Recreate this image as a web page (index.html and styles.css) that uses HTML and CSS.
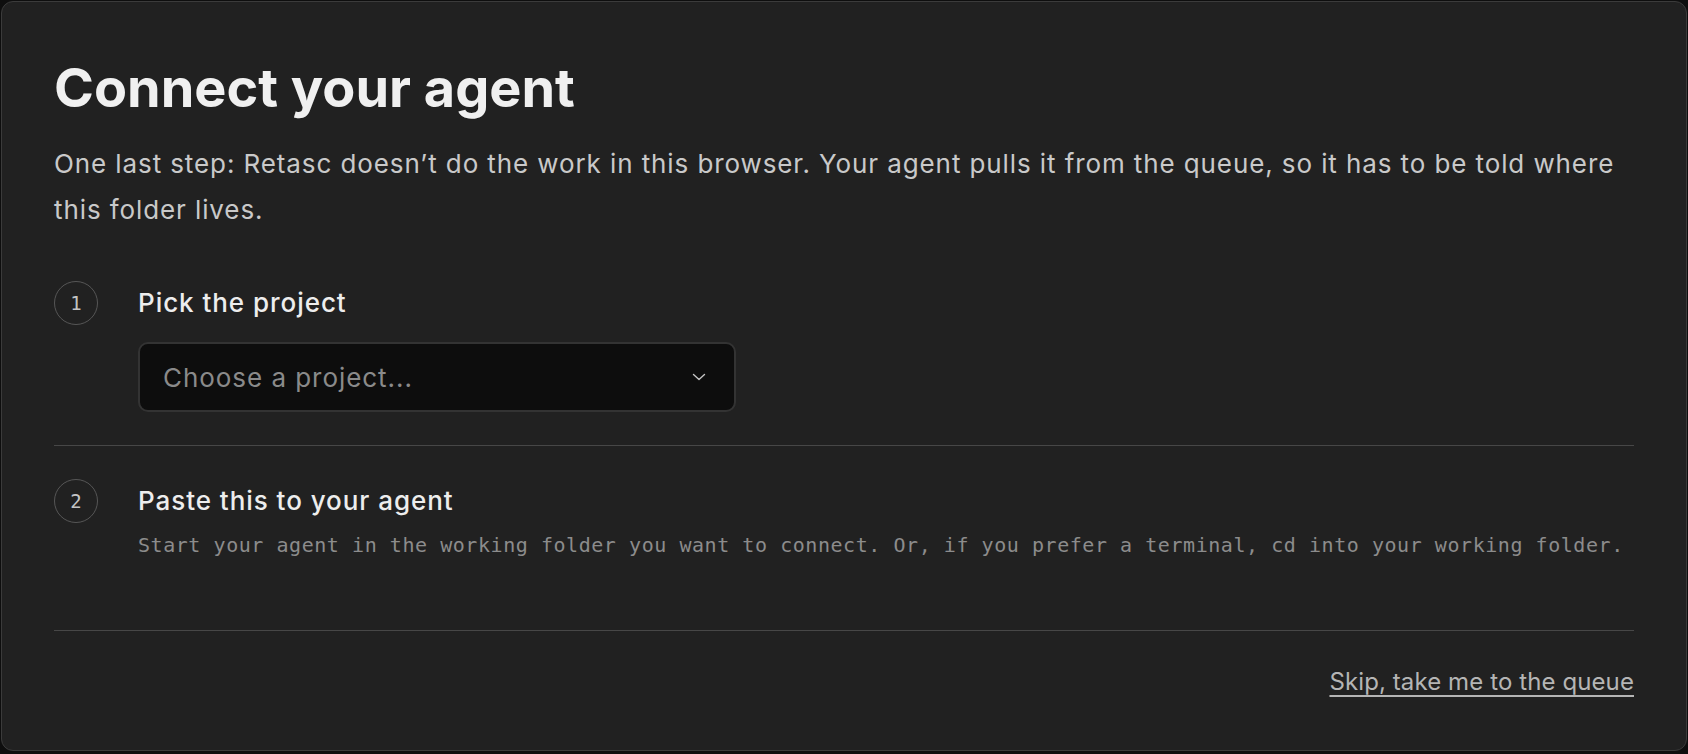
FILE: index.html
```html
<!DOCTYPE html>
<html lang="en">
<head>
  <meta charset="UTF-8">
  <meta name="viewport" content="width=device-width, initial-scale=1.0">
  <title>Connect your agent</title>
  <link rel="stylesheet" href="styles.css">
</head>
<body>

  <div class="card">
    <h1 class="title">Connect your agent</h1>
    <p class="lead">One last step: Retasc doesn’t do the work in this browser. Your agent pulls it from the queue, so it has to be told where this folder lives.</p>

    <div class="step">
      <span class="step-num">1</span>
      <div class="step-body">
        <h2 class="step-title">Pick the project</h2>
        <div class="select">
          <span class="select-value">Choose a project...</span>
          <svg class="chevron" width="14" height="8" viewBox="0 0 14 8" fill="none">
            <path d="M1.5 1.5 7 6.5 12.5 1.5" stroke="#c4c4c4" stroke-width="1.4" stroke-linecap="round" stroke-linejoin="round"/>
          </svg>
        </div>
      </div>
    </div>

    <div class="step step-last">
      <span class="step-num">2</span>
      <div class="step-body">
        <h2 class="step-title">Paste this to your agent</h2>
        <p class="hint">Start your agent in the working folder you want to connect. Or, if you prefer a terminal, cd into your working folder.</p>
      </div>
    </div>

    <div class="footer">
      <a class="skip" href="#">Skip, take me to the queue</a>
    </div>
  </div>

</body>
</html>
```

FILE: styles.css
```css
body {
  margin: 0;
  padding: 1px;
  background: #0e0e0e;
  font-family: 'Inter', 'Noto Sans', sans-serif;
}

.card {
  background: #212121;
  border: 1px solid #3b3b3b;
  border-radius: 12px;
  padding: 56px 52px 49px;
  box-sizing: border-box;
  height: 750px;
}

.title {
  margin: 0;
  font-size: 54px;
  line-height: 1.1;
  font-weight: 700;
  color: #f0f0f0;
}

.lead {
  margin: 24px 0 0;
  font-size: 26px;
  line-height: 46px;
  letter-spacing: 0.9px;
  color: #c9c9c9;
}

.step {
  display: flex;
  gap: 40px;
  margin-top: 48px;
  padding-bottom: 33px;
  border-bottom: 1px solid #474747;
}

.step + .step {
  margin-top: 0;
  padding-top: 33px;
}

.step-last {
  padding-bottom: 71px;
}

.step-num {
  flex: none;
  width: 42px;
  height: 42px;
  border: 1px solid #565656;
  border-radius: 50%;
  display: flex;
  justify-content: center;
  align-items: center;
  font-family: 'DejaVu Sans Mono', monospace;
  font-size: 19px;
  color: #c4c4c4;
}

.step-body {
  flex: 1;
}

.step-title {
  margin: 0;
  font-size: 26px;
  line-height: 44px;
  font-weight: 500;
  letter-spacing: 0.95px;
  color: #ededed;
}

.select {
  margin-top: 17px;
  width: 598px;
  height: 70px;
  box-sizing: border-box;
  background: #0d0d0d;
  border: 2px solid #333;
  border-radius: 10px;
  padding: 0 28px 0 23px;
  display: flex;
  align-items: center;
  justify-content: space-between;
}

.select-value {
  font-size: 26px;
  letter-spacing: 0.95px;
  color: #8a8a8a;
}

.hint {
  margin: 8px 0 0;
  font-family: 'DejaVu Sans Mono', 'Liberation Mono', monospace;
  font-size: 20px;
  line-height: 28px;
  letter-spacing: 0.55px;
  color: #8c8c8c;
  white-space: nowrap;
}

.footer {
  display: flex;
  justify-content: flex-end;
  padding-top: 35px;
}

.skip {
  font-size: 24px;
  line-height: 32px;
  letter-spacing: 0.1px;
  color: #b5b5b5;
  text-decoration: underline;
  text-underline-offset: 5px;
  text-decoration-thickness: 2px;
}
```
